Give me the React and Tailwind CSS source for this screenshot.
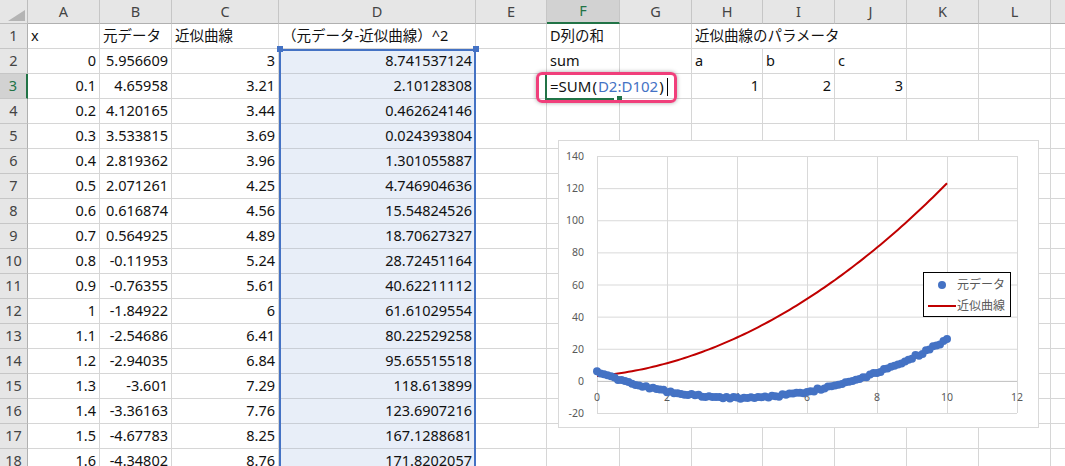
import React from "react";

const FONT = { fontFamily: '"Noto Sans", "Noto Sans CJK JP", sans-serif' };

const COLS = ["A", "B", "C", "D", "E", "F", "G", "H", "I", "J", "K", "L", "M"];

const A = ["0", "0.1", "0.2", "0.3", "0.4", "0.5", "0.6", "0.7", "0.8", "0.9", "1", "1.1", "1.2", "1.3", "1.4", "1.5", "1.6"];
const B = ["5.956609", "4.65958", "4.120165", "3.533815", "2.819362", "2.071261", "0.616874", "0.564925", "-0.11953", "-0.76355", "-1.84922", "-2.54686", "-2.94035", "-3.601", "-3.36163", "-4.67783", "-4.34802"];
const C = ["3", "3.21", "3.44", "3.69", "3.96", "4.25", "4.56", "4.89", "5.24", "5.61", "6", "6.41", "6.84", "7.29", "7.76", "8.25", "8.76"];
const D = ["8.741537124", "2.10128308", "0.462624146", "0.024393804", "1.301055887", "4.746904636", "15.54824526", "18.70627327", "28.72451164", "40.62211112", "61.61029554", "80.22529258", "95.65515518", "118.613899", "123.6907216", "167.1288681", "171.8202057"];

function cellContent(col, row) {
  if (row === 1) {
    const m = { A: "x", B: "元データ", C: "近似曲線", D: "（元データ-近似曲線）^2", F: "D列の和", H: "近似曲線のパラメータ" };
    return m[col] ? { v: m[col], align: "left" } : null;
  }
  if (row === 2) {
    const m = { F: "sum", H: "a", I: "b", J: "c" };
    if (m[col]) return { v: m[col], align: "left" };
  }
  if (row === 3) {
    const m = { H: "1", I: "2", J: "3" };
    if (m[col]) return { v: m[col], align: "right" };
    if (col === "F") return { formula: true };
  }
  const i = row - 2;
  if (i >= 0 && i < A.length) {
    if (col === "A") return { v: A[i], align: "right" };
    if (col === "B") return { v: B[i], align: "right" };
    if (col === "C") return { v: C[i], align: "right" };
    if (col === "D") return { v: D[i], align: "right" };
  }
  return null;
}

const ROWS = Array.from({ length: 18 }, (_, i) => i + 1);

const px = (x) => 39 + 35 * x;
const py = (v) => 16 + (140 - v) * 1.60625;

const bluePts = [];
for (let i = 0; i <= 100; i++) {
  const x = i / 10;
  let v;
  if (i < B.length) v = parseFloat(B[i]);
  else {
    const r = Math.sin(i * 78.233) * 43758.5453;
    const n = (r - Math.floor(r)) * 2 - 1;
    v = x * x - 8 * x + 5.4 + n * 0.8;
  }
  bluePts.push([px(x), py(v)]);
}
const redPts = [];
for (let i = 0; i <= 100; i++) {
  const x = i / 10;
  redPts.push(`${px(x).toFixed(2)},${py(x * x + 2 * x + 3).toFixed(2)}`);
}

function Chart() {
  const yTicks = [140, 120, 100, 80, 60, 40, 20, 0, -20];
  const xTicks = [0, 2, 4, 6, 8, 10, 12];
  return (
    <div className="absolute left-[558px] top-[140px] w-[481px] h-[288px] bg-white">
      <svg width="481" height="288" className="absolute left-0 top-0" style={FONT}>
        <rect x="0.5" y="0.5" width="480" height="287" fill="white" stroke="#d9d9d9" />
        {yTicks.map((t) =>
          t === 0 ? null : (
            <line key={"h" + t} x1={px(0)} x2={px(12)} y1={py(t) + 0.5} y2={py(t) + 0.5} stroke="#d9d9d9" strokeWidth="1" />
          )
        )}
        {xTicks.map((t) => (
          <line key={"v" + t} x1={px(t) + 0.5} x2={px(t) + 0.5} y1={py(140)} y2={py(-20)} stroke="#d9d9d9" strokeWidth="1" />
        ))}
        <line x1={px(0)} x2={px(12)} y1={py(0) + 0.5} y2={py(0) + 0.5} stroke="#bfbfbf" strokeWidth="1" />
        {yTicks.map((t) => (
          <text key={"yl" + t} x="26" y={py(t)} textAnchor="end" dominantBaseline="central" fontSize="10.5" fill="#595959">
            {t}
          </text>
        ))}
        {xTicks.map((t) => (
          <text key={"xl" + t} x={px(t)} y="257" textAnchor="middle" dominantBaseline="central" fontSize="10.5" fill="#595959">
            {t}
          </text>
        ))}
        <polyline points={redPts.join(" ")} fill="none" stroke="#c00000" strokeWidth="2" />
        {bluePts.map(([x, y], i) => (
          <circle key={i} cx={x} cy={y} r="4" fill="#4472c4" />
        ))}
      </svg>
      <div className="absolute left-[365px] top-[132px] w-[88px] h-[45px] border border-black bg-white flex flex-col pt-[2px]" style={FONT}>
        <div className="h-[21px] flex items-center">
          <div className="w-[28px] ml-[4px] flex justify-center">
            <div className="w-[8px] h-[8px] rounded-full bg-[#4472c4]" />
          </div>
          <span className="ml-[1px] text-[12px] text-[#595959] leading-none">元データ</span>
        </div>
        <div className="h-[21px] flex items-center">
          <div className="w-[28px] ml-[4px] flex justify-center">
            <div className="w-[28px] h-[2.5px] bg-[#c00000]" />
          </div>
          <span className="ml-[1px] text-[12px] text-[#595959] leading-none">近似曲線</span>
        </div>
      </div>
    </div>
  );
}

export default function App() {
  return (
    <div className="relative w-[1065px] h-[466px] overflow-hidden bg-white text-[14.5px] text-[#111]" style={FONT}>
      <div className="grid grid-cols-[28px_72px_72px_107px_197px_71px_73px_72px_71px_72px_72px_72px_72px_72px] grid-rows-[24px_repeat(18,25px)] w-[1123px]">
        <div className="bg-[#e6e6e6] border-r border-b border-[#bdbdbd] relative">
          <svg width="28" height="24" className="absolute left-0 top-0">
            <polygon points="25,10 25,21 8,21" fill="#b4b4b4" />
          </svg>
        </div>
        {COLS.map((c) =>
          c === "F" ? (
            <div key={c} className="bg-[#d2d2d2] border-r border-[#c6c6c6] border-b-2 border-b-[#217346] flex items-center justify-center text-[#217346]">
              {c}
            </div>
          ) : (
            <div key={c} className="bg-[#e6e6e6] border-r border-b border-r-[#c6c6c6] border-b-[#b0b0b0] flex items-center justify-center text-[#444]">
              {c}
            </div>
          )
        )}
        {ROWS.map((r) => (
          <React.Fragment key={r}>
            {r === 3 ? (
              <div className="bg-[#d2d2d2] border-b border-b-[#c6c6c6] border-r-2 border-r-[#217346] flex items-center justify-center text-[#217346]">
                {r}
              </div>
            ) : (
              <div className="bg-[#e6e6e6] border-b border-r border-b-[#c6c6c6] border-r-[#b0b0b0] flex items-center justify-center text-[#444]">
                {r}
              </div>
            )}
            {COLS.map((c) => {
              const cont = cellContent(c, r);
              const noRight = (r === 1 && (c === "H" || c === "I")) || (r === 3 && c === "F");
              const sel = c === "D" && r >= 2;
              const cls = [
                "relative flex items-center whitespace-nowrap overflow-visible border-b",
                noRight ? "" : "border-r",
                sel ? "bg-[#e8eef8] border-[#c9ced6]" : "border-[#d6d6d6]",
                cont && cont.align === "right" ? "justify-end pr-[3px]" : "justify-start pl-[3px]",
              ].join(" ");
              return (
                <div key={c} className={cls}>
                  {cont && cont.formula ? (
                    <span className="absolute left-[3px] top-[1px] flex items-center h-[23px] text-[15px] text-[#111]">
                      =SUM<span className="mx-[1px]">(</span><span className="text-[#4472c4]">D2:D102</span><span className="ml-[1px]">)</span>
                      <span className="ml-[3px] w-px h-[18px] bg-black" />
                    </span>
                  ) : cont ? (
                    <span>{cont.v}</span>
                  ) : null}
                </div>
              );
            })}
          </React.Fragment>
        ))}
      </div>

      <div className="absolute left-[279px] top-[49px] w-[197px] h-[430px] border-2 border-b-0 border-[#4472c4] pointer-events-none" />
      <div className="absolute left-[277px] top-[46px] w-[6px] h-[6px] bg-[#4472c4]" />
      <div className="absolute left-[473px] top-[46px] w-[6px] h-[6px] bg-[#4472c4]" />

      <div className="absolute left-[545px] top-[73px] w-[77px] h-[27px] border-2 border-r-0 border-[#217346] pointer-events-none" />
      <div className="absolute left-[614px] top-[97px] w-[4px] h-[3px] bg-white" />
      <div className="absolute left-[617px] top-[96px] w-[5px] h-[5px] bg-[#217346]" />

      <div className="absolute left-[536px] top-[72px] w-[141px] h-[31px] rounded-[6px] border-[3px] border-[#f03f7b] shadow-[0_0_4px_rgba(0,0,0,0.35)] pointer-events-none" />

      <Chart />
    </div>
  );
}
